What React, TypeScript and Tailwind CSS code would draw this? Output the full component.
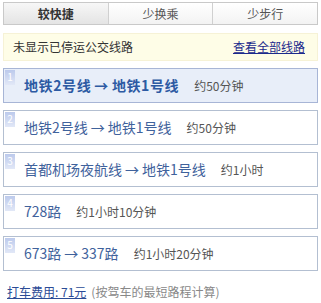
import React from "react";

const font = { fontFamily: '"Noto Sans CJK SC", "Noto Sans", sans-serif' };

type Item = { parts: string[]; time: string };

const items: Item[] = [
  { parts: ["地铁2号线", "地铁1号线"], time: "约50分钟" },
  { parts: ["地铁2号线", "地铁1号线"], time: "约50分钟" },
  { parts: ["首都机场夜航线", "地铁1号线"], time: "约1小时" },
  { parts: ["728路"], time: "约1小时10分钟" },
  { parts: ["673路", "337路"], time: "约1小时20分钟" },
];

export default function App() {
  return (
    <div className="w-[321px] h-[303px] bg-white overflow-hidden" style={font}>
      <div className="mx-[3px] mt-[2px] flex h-[23px] border border-[#c9c9c9] text-[12px]">
        <div className="flex-1 flex items-center justify-center font-bold text-[#333] bg-gradient-to-b from-[#f7f7f7] to-[#e4e4e4] border-r border-[#d0d0d0]">
          较快捷
        </div>
        <div className="flex-1 flex items-center justify-center text-[#555] bg-gradient-to-b from-white to-[#f3f3f3] border-r border-[#d0d0d0]">
          少换乘
        </div>
        <div className="flex-1 flex items-center justify-center text-[#555] bg-gradient-to-b from-white to-[#f3f3f3]">
          少步行
        </div>
      </div>

      <div className="mx-[3px] mt-[8px] h-[28px] flex items-center justify-between px-[9px] bg-[#fefde7] border border-[#f6f2d6] text-[12px]">
        <span className="text-[#333]">未显示已停运公交线路</span>
        <span className="text-[#1b2a8c] underline mr-[3px]">查看全部线路</span>
      </div>

      <div className="mx-[3px] mt-[7px] flex flex-col gap-[7px]">
        {items.map((it, i) => {
          const active = i === 0;
          return (
            <div
              key={i}
              className={
                "h-[35px] flex border " +
                (active ? "bg-[#e8eef9] border-[#a7b5d6]" : "bg-white border-[#b3bfd1]")
              }
            >
              <div className="ml-[1px] mt-[1px] w-[10px] h-[15px] flex items-start justify-center bg-gradient-to-b from-[#bccaec] to-[#e2e8f7] text-white text-[10px] leading-[13px]">
                {i + 1}
              </div>
              <div className="flex items-center ml-[9px]">
                <span
                  className={
                    "text-[14px] flex items-center " +
                    (active ? "font-bold text-[#2d5aa3] tracking-[0.6px]" : "text-[#3f629c]")
                  }
                >
                  {it.parts.map((p, j) => (
                    <React.Fragment key={j}>
                      {j > 0 && <span className="mx-[3px]">→</span>}
                      <span>{p}</span>
                    </React.Fragment>
                  ))}
                </span>
                <span className="ml-[15px] text-[12px] text-[#555]">{it.time}</span>
              </div>
            </div>
          );
        })}
      </div>

      <div className="mx-[7px] mt-[12px] text-[12px] flex items-center">
        <span className="text-[#2b4b96] underline">打车费用: 71元</span>
        <span className="ml-[5px] text-[#888]">(按驾车的最短路程计算)</span>
      </div>
    </div>
  );
}
